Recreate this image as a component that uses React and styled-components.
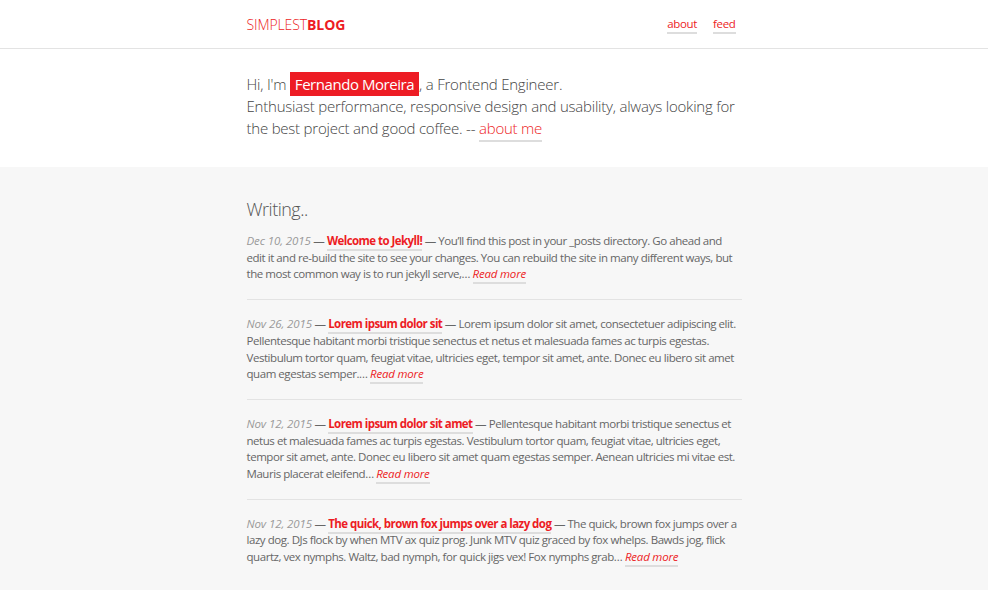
import styled, { createGlobalStyle } from 'styled-components'

const red = '#ed1c24'

const GlobalStyle = createGlobalStyle`
  html, body {
    margin: 0;
    padding: 0;
    background: #f7f7f7;
    font-family: "Open Sans", "Liberation Sans", sans-serif;
    color: #666;
  }
`

const Container = styled.div`
  width: 495px;
  margin: 0 auto;
`

const Header = styled.header`
  height: 48px;
  background: #fff;
  border-bottom: 1px solid #e3e3e3;
`

const HeaderInner = styled(Container)`
  height: 100%;
  display: flex;
  align-items: center;
  justify-content: space-between;
`

const Logo = styled.a`
  color: ${red};
  font-size: 14px;
  font-weight: 300;
  letter-spacing: -0.1px;
  text-decoration: none;
  strong {
    font-weight: 700;
  }
`

const Nav = styled.nav`
  display: flex;
  gap: 16px;
  padding-right: 6px;
  margin-top: 1px;
`

const NavLink = styled.a`
  color: ${red};
  font-size: 11.5px;
  letter-spacing: -0.35px;
  text-decoration: none;
  padding-bottom: 1px;
  border-bottom: 2px solid #ddd;
`

const Hero = styled.section`
  background: #fff;
  padding: 24px 0 28px;
`

const Intro = styled.p`
  margin: 0;
  font-size: 15px;
  letter-spacing: -0.22px;
  font-weight: 300;
  line-height: 22px;
  color: #444;
`

const Name = styled.span`
  background: ${red};
  color: #fff;
  padding: 2px 5px;
  letter-spacing: -0.45px;
  font-weight: 400;
`

const UnderLink = styled.a`
  color: ${red};
  text-decoration: none;
  padding-bottom: ${p => p.$pad || 1}px;
  border-bottom: 2px solid #ddd;
  font-weight: ${p => p.$weight || 'inherit'};
  font-style: ${p => (p.$italic ? 'italic' : 'normal')};
  letter-spacing: ${p => p.$spacing || 'inherit'};
`

const Writing = styled.section`
  padding: 29px 0 20px;
`

const Title = styled.h2`
  margin: 0 0 11px;
  font-size: 18px;
  letter-spacing: -0.5px;
  font-weight: 300;
  color: #555;
  line-height: 26px;
`

const Post = styled.article`
  font-size: 11.5px;
  letter-spacing: -0.45px;
  line-height: 16.7px;
  color: #666;
  padding: 16px 0;
  border-bottom: 1px solid #e3e3e3;
  &:first-of-type {
    padding-top: 0;
  }
  &:last-of-type {
    border-bottom: none;
  }
`

const PostDate = styled.time`
  font-style: italic;
  color: #999;
  letter-spacing: -0.1px;
`

const posts = [
  {
    date: 'Dec 10, 2015',
    title: 'Welcome to Jekyll!',
    text: 'You’ll find this post in your _posts directory. Go ahead and edit it and re-build the site to see your changes. You can rebuild the site in many different ways, but the most common way is to run jekyll serve,…',
  },
  {
    date: 'Nov 26, 2015',
    title: 'Lorem ipsum dolor sit',
    text: 'Lorem ipsum dolor sit amet, consectetuer adipiscing elit. Pellentesque habitant morbi tristique senectus et netus et malesuada fames ac turpis egestas. Vestibulum tortor quam, feugiat vitae, ultricies eget, tempor sit amet, ante. Donec eu libero sit amet quam egestas semper.…',
  },
  {
    date: 'Nov 12, 2015',
    title: 'Lorem ipsum dolor sit amet',
    text: 'Pellentesque habitant morbi tristique senectus et netus et malesuada fames ac turpis egestas. Vestibulum tortor quam, feugiat vitae, ultricies eget, tempor sit amet, ante. Donec eu libero sit amet quam egestas semper. Aenean ultricies mi vitae est. Mauris placerat eleifend…',
  },
  {
    date: 'Nov 12, 2015',
    title: 'The quick, brown fox jumps over a lazy dog',
    text: 'The quick, brown fox jumps over a lazy dog. DJs flock by when MTV ax quiz prog. Junk MTV quiz graced by fox whelps. Bawds jog, flick quartz, vex nymphs. Waltz, bad nymph, for quick jigs vex! Fox nymphs grab…',
  },
]

export default function App() {
  return (
    <>
      <GlobalStyle />
      <Header>
        <HeaderInner>
          <Logo href="#">
            SIMPLEST<strong>BLOG</strong>
          </Logo>
          <Nav>
            <NavLink href="#">about</NavLink>
            <NavLink href="#">feed</NavLink>
          </Nav>
        </HeaderInner>
      </Header>
      <Hero>
        <Container>
          <Intro>
            Hi, I'm <Name>Fernando Moreira</Name>, a Frontend Engineer.
            <br />
            Enthusiast performance, responsive design and usability, always looking for the best
            project and good coffee. -- <UnderLink href="#" $pad={2}>about me</UnderLink>
          </Intro>
        </Container>
      </Hero>
      <Writing>
        <Container>
          <Title>Writing..</Title>
          {posts.map((p, i) => (
            <Post key={i}>
              <PostDate>{p.date}</PostDate> —{' '}
              <UnderLink href="#" $weight={700} $spacing="-0.55px">{p.title}</UnderLink> — {p.text}{' '}
              <UnderLink href="#" $italic $spacing="-0.2px">Read more</UnderLink>
            </Post>
          ))}
        </Container>
      </Writing>
    </>
  )
}
